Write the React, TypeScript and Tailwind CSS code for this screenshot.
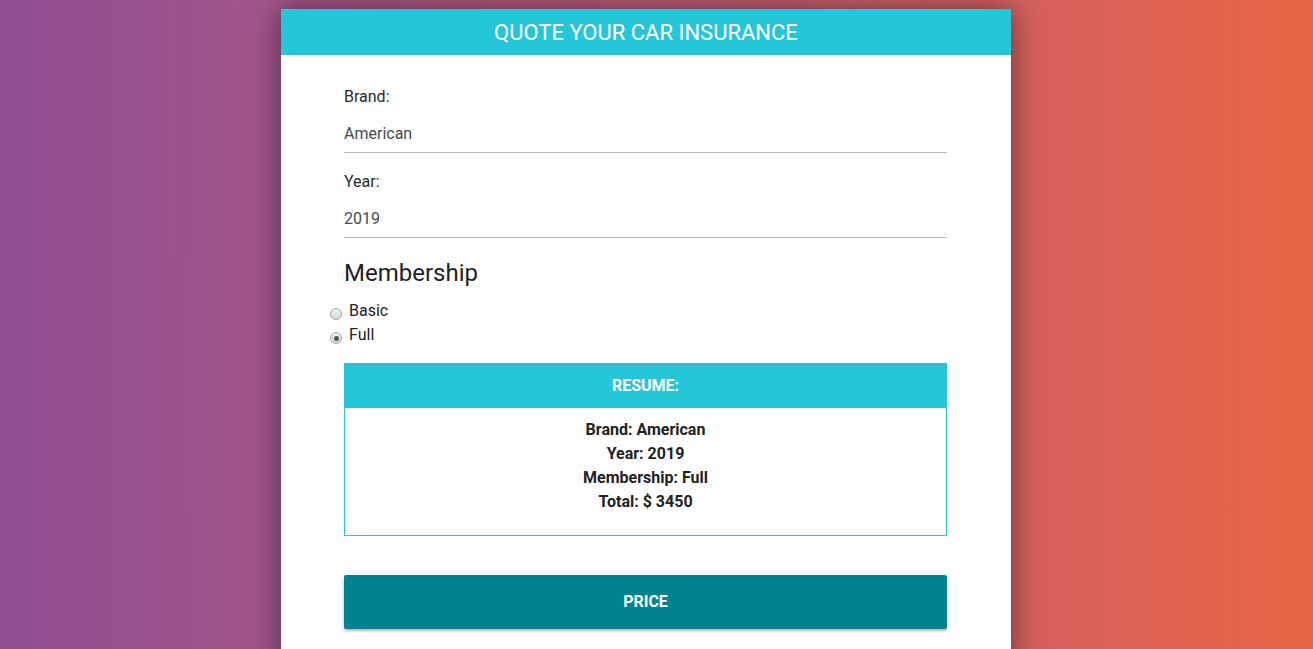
import React, { useState } from "react";

type Plan = "basic" | "full";

function Radio({ checked }: { checked: boolean }) {
  return (
    <span className="ml-[6px] mr-[7px] mt-[9px] flex h-[12px] w-[12px] shrink-0 items-center justify-center rounded-full border border-[#a6a6a6] bg-gradient-to-b from-[#f4f4f4] to-[#d6d6d6]">
      {checked ? <span className="h-[5px] w-[5px] rounded-full bg-[#555]" /> : null}
    </span>
  );
}

function Field({ label, value }: { label: string; value: string }) {
  return (
    <div className="mb-[17px]">
      <label className="block text-[16px] leading-[24px] text-[#2b2b2b]">{label}</label>
      <div className="flex h-[44px] items-center border-b border-[#bdbdbd] pt-[6px] text-[16px] text-[#4a4a4a]">
        {value}
      </div>
    </div>
  );
}

export default function App() {
  const [plan, setPlan] = useState<Plan>("full");

  return (
    <div
      className="min-h-screen bg-gradient-to-r from-[#904e95] to-[#e96443] pr-[21px] pt-[9px]"
      style={{ fontFamily: "Roboto, 'Liberation Sans', sans-serif" }}
    >
      <div className="mx-auto w-[730px] bg-white pb-[40px] shadow-[0_0_28px_rgba(0,0,0,0.5)]">
        <header className="flex h-[46px] items-center justify-center bg-[#26c6da] text-[22px] text-white">
          QUOTE YOUR CAR INSURANCE
        </header>

        <div className="pl-[63px] pr-[64px] pt-[30px]">
          <Field label="Brand:" value="American" />
          <Field label="Year:" value="2019" />

          <h2 className="mt-[19px] text-[24px] leading-[32px] text-[#222]">Membership</h2>

          <div className="-ml-[20px] mt-[10px]">
            <label className="flex cursor-pointer text-[16px] leading-[24px] text-[#222]" onClick={() => setPlan("basic")}>
              <Radio checked={plan === "basic"} />
              Basic
            </label>
            <label className="flex cursor-pointer text-[16px] leading-[24px] text-[#222]" onClick={() => setPlan("full")}>
              <Radio checked={plan === "full"} />
              Full
            </label>
          </div>

          <div className="mt-[16px] border border-[#26c6da]">
            <div className="flex h-[44px] items-center justify-center bg-[#26c6da] text-[16px] font-bold text-white">
              RESUME:
            </div>
            <div className="pb-[21px] pt-[10px] text-center text-[16px] font-bold leading-[24px] text-[#222]">
              <p>Brand: American</p>
              <p>Year: 2019</p>
              <p>Membership: {plan === "full" ? "Full" : "Basic"}</p>
              <p>Total: $ 3450</p>
            </div>
          </div>

          <button className="mt-[39px] flex h-[54px] w-full items-center justify-center rounded-[2px] bg-[#00838f] text-[16px] font-bold text-white shadow-[0_2px_3px_rgba(0,0,0,0.3)]">
            PRICE
          </button>
        </div>
      </div>
    </div>
  );
}
